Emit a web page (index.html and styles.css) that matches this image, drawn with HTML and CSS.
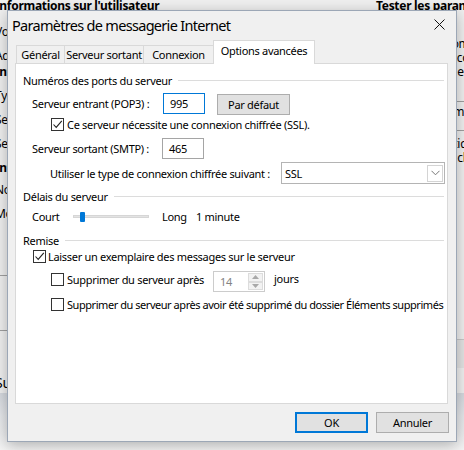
FILE: index.html
```html
<!DOCTYPE html>
<html lang="fr">
<head>
  <meta charset="UTF-8">
  <title>Paramètres de messagerie Internet</title>
  <link rel="stylesheet" href="styles.css">
</head>
<body>
  <!-- fenetre en arriere-plan -->
  <div class="backdrop">
    <div class="bg-cols">
      <div class="bg-left">
        <div class="bg-head">Informations sur l'utilisateur</div>
        <div class="bg-line l-name">Votre nom :</div>
        <div class="bg-line">Adresse de messagerie :</div>
        <div class="bg-head h-srv">Informations sur le serveur</div>
        <div class="bg-line">Type de compte :</div>
        <div class="bg-line">Serveur de courrier entrant :</div>
        <div class="bg-line">Serveur de courrier sortant (SMTP) :</div>
        <div class="bg-head">Informations de connexion</div>
        <div class="bg-line l-user">Nom d'utilisateur :</div>
        <div class="bg-line">Mot de passe :</div>
        <div class="bg-sep"></div>
        <div class="bg-sep low"></div>
        <div class="bg-line last">Suivant</div>
      </div>
      <div class="bg-right">
        <div class="bg-head">Tester les paramètres du compte</div>
        <div class="bg-text">Nous vous recommandons de tester votre compte pour vérifier que les entrées sont correctes.</div>
        <div class="bg-sep"></div>
        <div class="bg-line">Tester les paramètres</div>
        <div class="bg-sep"></div>
        <div class="bg-text">Tester automatiquement les paramètres en cliquant sur Suivant</div>
        <div class="bg-btn">Paramètres</div>
      </div>
    </div>
    <div class="bg-foot"></div>
  </div>

  <div class="dialog">
    <div class="titlebar">
      <span class="title">Paramètres de messagerie Internet</span>
      <svg class="close" width="11" height="11" viewBox="0 0 11 11">
        <path d="M0.5 0.5 L10.5 10.5 M10.5 0.5 L0.5 10.5" stroke="#111" stroke-width="1" fill="none"/>
      </svg>
    </div>

    <div class="tabs">
      <div class="tab t-gen">Général</div>
      <div class="tab t-out">Serveur sortant</div>
      <div class="tab t-cnx">Connexion</div>
      <div class="tab active">Options avancées</div>
    </div>

    <div class="panel">
      <div class="group-title g1">Numéros des ports du serveur</div>

      <div class="row r-pop">
        <span class="lbl w-port">Serveur entrant (POP3) :</span>
        <span class="field focus">995</span>
        <span class="btn btn-def">Par défaut</span>
      </div>

      <div class="row r-ssl">
        <span class="cb checked"><svg width="11" height="11" viewBox="0 0 11 11"><path d="M1.5 5.5 L4.2 8.4 L9.8 1.8" stroke="#222" stroke-width="1.1" fill="none"/></svg></span>
        <span class="cb-text">Ce serveur nécessite une connexion chiffrée (SSL).</span>
      </div>

      <div class="row r-smtp">
        <span class="lbl w-smtp">Serveur sortant (SMTP) :</span>
        <span class="field">465</span>
      </div>

      <div class="row r-enc">
        <span class="lbl w-enc">Utiliser le type de connexion chiffrée suivant :</span>
        <span class="select">
          <span class="select-val">SSL</span>
          <span class="select-arrow"><svg width="9" height="6" viewBox="0 0 9 6"><path d="M0.5 0.8 L4.5 4.8 L8.5 0.8" stroke="#777" stroke-width="1" fill="none"/></svg></span>
        </span>
      </div>

      <div class="group-title g2">Délais du serveur</div>

      <div class="row r-slider">
        <span class="lbl w-court">Court</span>
        <span class="track"><span class="thumb"></span></span>
        <span class="lbl w-long">Long</span>
        <span class="lbl">1 minute</span>
      </div>

      <div class="group-title g3">Remise</div>

      <div class="row r-keep">
        <span class="cb checked"><svg width="11" height="11" viewBox="0 0 11 11"><path d="M1.5 5.5 L4.2 8.4 L9.8 1.8" stroke="#222" stroke-width="1.1" fill="none"/></svg></span>
        <span class="cb-text">Laisser un exemplaire des messages sur le serveur</span>
      </div>

      <div class="row r-days">
        <span class="cb"></span>
        <span class="cb-text w-after">Supprimer du serveur après</span>
        <span class="spin">
          <span class="spin-val">14</span>
          <span class="spin-btns">
            <span class="spin-b"><svg width="7" height="4" viewBox="0 0 7 4"><path d="M0 4 L3.5 0 L7 4 Z" fill="#a8a8a8"/></svg></span>
            <span class="spin-b"><svg width="7" height="4" viewBox="0 0 7 4"><path d="M0 0 L3.5 4 L7 0 Z" fill="#a8a8a8"/></svg></span>
          </span>
        </span>
        <span class="lbl days">jours</span>
      </div>

      <div class="row r-del">
        <span class="cb"></span>
        <span class="cb-text tight">Supprimer du serveur après avoir été supprimé du dossier Éléments supprimés</span>
      </div>
    </div>

    <div class="actions">
      <span class="btn btn-ok">OK</span>
      <span class="btn">Annuler</span>
    </div>
  </div>
</body>
</html>
```

FILE: styles.css
```css
/* mise en page generale */
body {
  margin: 0;
  width: 464px;
  height: 450px;
  overflow: hidden;
  position: relative;
  background: #f0f0f0;
  font-family: "Noto Sans", "Open Sans", sans-serif;
  font-size: 11px;
  letter-spacing: -0.3px;
  color: #000;
}

/* fenetre en arriere-plan */
.backdrop {
  height: 450px;
  display: flex;
  flex-direction: column;
  font-size: 12px;
}

.bg-cols {
  height: 393px;
  display: flex;
  justify-content: space-between;
  overflow: hidden;
}

.bg-left {
  margin-left: -5px;
  width: 300px;
  white-space: nowrap;
}

.bg-right {
  width: 160px;
  margin-right: -72px;
}

.bg-head {
  font-weight: bold;
  font-size: 12px;
  line-height: 14px;
  margin-bottom: 10px;
}

.bg-left .bg-line {
  line-height: 24px;
}

.bg-left .bg-head {
  margin: 0;
  line-height: 24px;
}

.bg-left .bg-head:first-child {
  margin-top: -6px;
}

.bg-left .l-name { margin-top: 2px; }
.bg-left .h-srv { margin-top: -8px; }
.bg-left .l-user { margin-top: -2px; }

.bg-sep {
  border-top: 1px solid #a0a0a0;
  margin-top: 49px;
}

.bg-sep.low {
  margin-top: 54px;
}

.bg-left .last {
  margin-top: 40px;
  font-size: 14px;
}

.bg-text {
  line-height: 14px;
  margin-top: 6px;
}

.bg-right .bg-head {
  margin-top: -1px;
}

.bg-right .bg-sep {
  margin-top: 8px;
}

.bg-right .bg-line {
  line-height: 20px;
}

.bg-btn {
  margin-top: 160px;
  height: 28px;
  border-top: 1px solid #c8c8c8;
  background: #e4e4e4;
  color: #9a9a9a;
  line-height: 28px;
  text-align: right;
  white-space: nowrap;
}

.bg-foot {
  flex: 1;
  background: linear-gradient(#d5d9df, #e6e8eb 40%, #f4f4f4);
}

/* boite de dialogue */
.dialog {
  position: absolute;
  left: 7px;
  top: 10px;
  width: 450px;
  height: 432px;
  box-sizing: border-box;
  border: 1px solid #9ca7b6;
  background: #f0f0f0;
  box-shadow: 0 3px 14px rgba(0, 0, 0, 0.28);
  display: flex;
  flex-direction: column;
}

.titlebar {
  height: 29px;
  display: flex;
  align-items: center;
  justify-content: space-between;
  padding: 0 11px 0 4px;
}

.title {
  font-size: 14.5px;
  letter-spacing: -0.7px;
  margin-top: -1px;
}

.close {
  margin-top: -2px;
}

.tabs {
  height: 23px;
  display: flex;
  align-items: flex-end;
  padding-left: 8px;
  position: relative;
  z-index: 1;
}

.tab {
  height: 18px;
  line-height: 18px;
  box-sizing: border-box;
  border: 1px solid #d9d9d9;
  border-right: none;
  border-bottom: none;
  background: #f0f0f0;
  text-align: center;
  white-space: nowrap;
}

.t-gen { width: 48px; }
.t-out { width: 79px; }
.t-cnx { width: 70px; }

.tab.active {
  width: 102px;
  height: 24px;
  line-height: 20px;
  border-right: 1px solid #d9d9d9;
  background: #fff;
  margin-bottom: -1px;
}

.panel {
  height: 341px;
  margin: 0 8px 0 7px;
  box-sizing: border-box;
  border: 1px solid #d9d9d9;
  background: #fff;
  padding-top: 6px;
}

.group-title {
  height: 20px;
  display: flex;
  align-items: center;
  margin-left: 7px;
  margin-right: 3px;
  white-space: nowrap;
}

.group-title::after {
  content: "";
  flex: 1;
  border-top: 1px solid #dcdcdc;
  margin-left: 6px;
  margin-top: 1px;
}

.g2 { margin-top: 2px; }
.g3 { margin-top: 4px; }

.row {
  display: flex;
  align-items: center;
  white-space: nowrap;
}

.row > * {
  flex-shrink: 0;
}

.r-pop { height: 21px; margin-top: 3px; margin-left: 16px; }
.r-ssl { height: 13px; margin-top: 4px; margin-left: 35px; }
.r-smtp { height: 21px; margin-top: 7px; margin-left: 16px; }
.r-enc { height: 22px; margin-top: 3px; margin-left: 34px; }
.r-slider { height: 20px; margin-left: 16px; }
.r-keep { height: 13px; margin-left: 17px; }
.r-days { height: 21px; margin-top: 8px; margin-left: 35px; }
.r-del { height: 13px; margin-top: 6px; margin-left: 35px; }

.w-port { width: 131px; }
.w-smtp { width: 130px; }
.w-enc { width: 231px; }
.w-court { width: 41px; }
.w-long { width: 34px; margin-left: 13px; }
.w-after { width: 146px; }

.tight {
  letter-spacing: -0.45px;
}

.field {
  width: 42px;
  height: 21px;
  box-sizing: border-box;
  border: 1px solid #a5a5a5;
  padding-left: 6px;
  line-height: 19px;
}

.field.focus {
  border-color: #0078d7;
}

.btn {
  width: 73px;
  height: 21px;
  box-sizing: border-box;
  border: 1px solid #adadad;
  background: #e1e1e1;
  text-align: center;
  line-height: 19px;
}

.btn-def {
  margin-left: 12px;
  margin-top: 1px;
}

.cb {
  width: 13px;
  height: 13px;
  box-sizing: border-box;
  border: 1px solid #333;
  background: #fff;
  display: flex;
  align-items: center;
  justify-content: center;
}

.cb-text {
  margin-left: 3px;
}

.r-keep .cb-text { margin-left: 2px; }

.r-days .cb {
  margin-top: -4px;
}

.r-days .cb-text {
  margin-top: -4px;
}

.select {
  width: 164px;
  height: 22px;
  box-sizing: border-box;
  border: 1px solid #b4b4b4;
  display: flex;
  align-items: center;
  justify-content: space-between;
  padding: 0 1px 0 3px;
}

.select-arrow {
  width: 16px;
  height: 17px;
  box-sizing: border-box;
  border: 1px solid #d4d4d4;
  display: flex;
  align-items: center;
  justify-content: center;
}

.track {
  width: 76px;
  height: 3px;
  background: #e3e3e3;
  border: 1px solid #d6d6d6;
  box-sizing: border-box;
  position: relative;
}

.thumb {
  position: absolute;
  left: 6px;
  top: -4px;
  width: 5px;
  height: 10px;
  background: #0078d7;
  border-radius: 1px;
}

.spin {
  width: 52px;
  height: 21px;
  box-sizing: border-box;
  border: 1px solid #cccccc;
  display: flex;
  justify-content: space-between;
  color: #838383;
}

.spin-val {
  padding-left: 6px;
  line-height: 19px;
}

.spin-btns {
  width: 15px;
  display: flex;
  flex-direction: column;
  padding: 1px 1px 1px 0;
}

.spin-b {
  flex: 1;
  border: 1px solid #dcdcdc;
  background: #f2f2f2;
  display: flex;
  align-items: center;
  justify-content: center;
}

.days {
  margin-left: 9px;
  margin-top: -6px;
}

.actions {
  display: flex;
  justify-content: flex-end;
  gap: 8px;
  padding: 8px 7px 0 0;
}

.btn-ok {
  border: 2px solid #0078d7;
  line-height: 17px;
}
```
